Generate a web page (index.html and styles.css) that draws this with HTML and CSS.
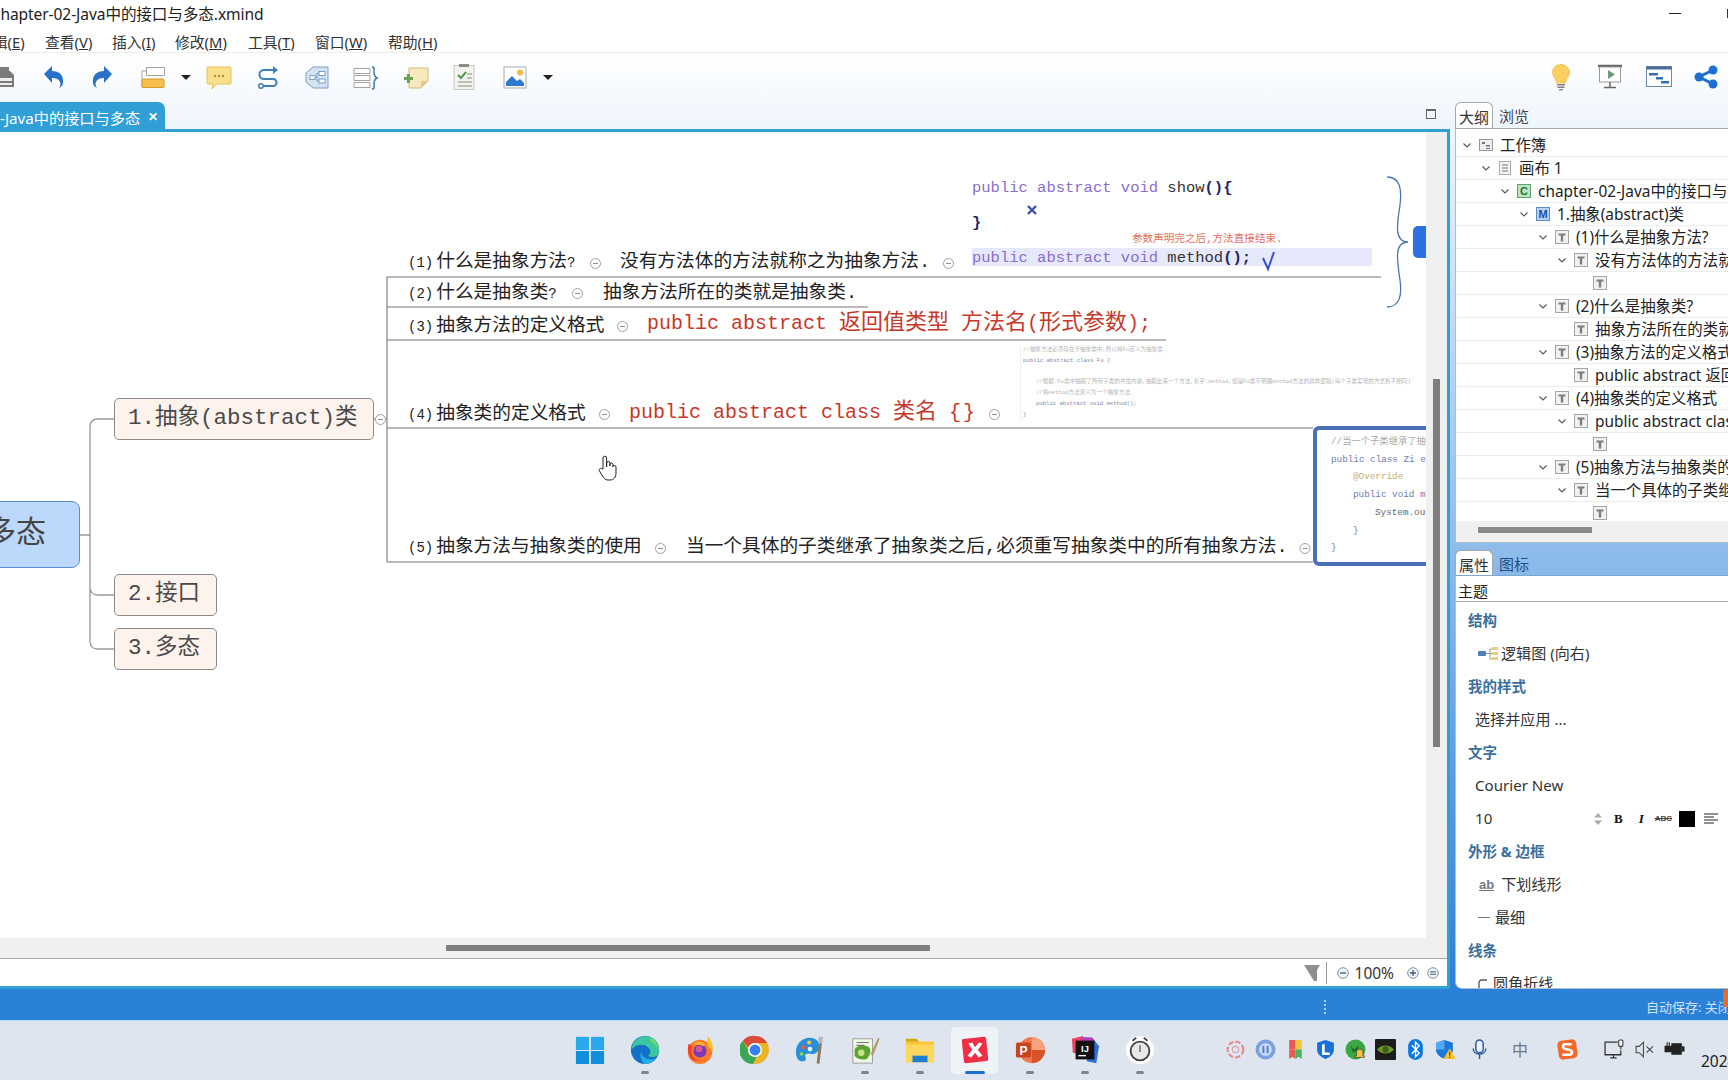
FILE: index.html
```html
<!DOCTYPE html>
<html lang="zh">
<head>
<meta charset="utf-8">
<title>XMind</title>
<link rel="stylesheet" href="styles.css">
</head>
<body>
<svg class="defs" width="0" height="0">
  <symbol id="ti" viewBox="0 0 14 14"><rect x=".5" y=".5" width="13" height="13" fill="#f1f1f1" stroke="#a5a5a5"/><path d="M3.5 3.5h7v2h-2.3v6H5.8v-6H3.5z" fill="#7d7d7d"/></symbol>
  <symbol id="chev" viewBox="0 0 12 12"><path d="M2.5 4.5 6 8l3.5-3.5" fill="none" stroke="#555" stroke-width="1.1"/></symbol>
</svg>

<header class="titlebar">
  <span class="title">chapter-02-Java中的接口与多态.xmind</span>
  <span class="minimize"></span>
  <span class="maximize"></span>
</header>

<nav class="menubar">
  <span class="menu first">编辑(<u>E</u>)</span>
  <span class="menu m-view">查看(<u>V</u>)</span>
  <span class="menu m-ins">插入(<u>I</u>)</span>
  <span class="menu m-mod">修改(<u>M</u>)</span>
  <span class="menu m-tool">工具(<u>T</u>)</span>
  <span class="menu m-win">窗口(<u>W</u>)</span>
  <span class="menu m-help">帮助(<u>H</u>)</span>
</nav>

<div class="main">
  <div class="toolbar">
    <span class="tb tb-first"><svg viewBox="0 0 28 28"><path d="M4 8h17l4 4v12H4z" fill="#7b7b7b"/><rect x="9" y="4" width="11" height="8" fill="#7b7b7b"/><rect x="6" y="15" width="17" height="3" fill="#eee"/><rect x="6" y="20" width="17" height="2" fill="#eee"/></svg></span>
    <span class="tb g23"><svg viewBox="0 0 28 28"><path d="M4 11 12 3v5c7 0 12 4 11 12-.2 2-1.6 4-4 5 1.5-2 1.8-4 1-6-1-2.5-4-4-8-4v5z" fill="#2a72c9"/></svg></span>
    <span class="tb g20"><svg class="flip" viewBox="0 0 28 28"><path d="M4 11 12 3v5c7 0 12 4 11 12-.2 2-1.6 4-4 5 1.5-2 1.8-4 1-6-1-2.5-4-4-8-4v5z" fill="#2a72c9"/></svg></span>
    <span class="tb g23"><svg viewBox="0 0 28 28"><path d="M7.500 4.500h18v8h-18zM7.500 8H3v16" fill="#fff" stroke="#a3a3a3"/><rect x="3" y="16" width="22" height="8.500" rx="1" fill="#f6bd4f" stroke="#d99b2b"/></svg></span>
    <span class="tb dd g13"><svg viewBox="0 0 12 28"><path d="M1 12h10l-5 5z" fill="#222"/></svg></span>
    <span class="tb g13"><svg viewBox="0 0 28 28"><path d="M3 4h22a1 1 0 0 1 1 1v15a1 1 0 0 1-1 1H12l-5 5 1-5H3a1 1 0 0 1-1-1V5a1 1 0 0 1 1-1z" fill="#fbe08c" stroke="#e9c15d"/><circle cx="10" cy="13" r="1.200" fill="#b98a2c"/><circle cx="14" cy="13" r="1.200" fill="#b98a2c"/><circle cx="18" cy="13" r="1.200" fill="#b98a2c"/></svg></span>
    <span class="tb g22"><svg viewBox="0 0 28 28"><path d="M22 7H9a4.500 4.500 0 0 0 0 9h9a3.500 3.500 0 0 1 0 7H8" fill="none" stroke="#3f7fb8" stroke-width="2"/><path d="m18 3 5 4-5 4z" fill="#3f7fb8"/><circle cx="6" cy="23" r="2.200" fill="#fff" stroke="#3f7fb8" stroke-width="1.500"/></svg></span>
    <span class="tb g20"><svg viewBox="0 0 28 28"><path d="M3 10 10 4h15v21H10l-7-6z" fill="#d5e3f1" stroke="#7b9fc6"/><rect x="7" y="12.500" width="5" height="4" fill="#fff" stroke="#7b9fc6"/><rect x="16" y="8.500" width="6" height="4" fill="#fff" stroke="#7b9fc6"/><rect x="16" y="16" width="6" height="4" fill="#fff" stroke="#7b9fc6"/><path d="M12 14.500h2v-4h2M14 14.500V18h2" fill="none" stroke="#7b9fc6"/></svg></span>
    <span class="tb g21"><svg viewBox="0 0 28 28"><path d="M2 5.500h16v5H2zM2 12.500h16v5H2zM2 19.500h16v5H2z" fill="#fff" stroke="#a3a3a3"/><path d="M20 4c3 0 2 2 2 5 0 3 1 5 3 6-2 1-3 3-3 6s1 5-2 5" fill="none" stroke="#3f78b0" stroke-width="1.500"/></svg></span>
    <span class="tb g22"><svg viewBox="0 0 28 28"><path d="M7 5h19v13l-7 7H7z" fill="#f7e8bd" stroke="#d4bb79"/><path d="M19 25v-7h7z" fill="#e3cc88"/><path d="M5 11v3H2v3h3v3h3v-3h3v-3H8v-3z" fill="#6f9f56"/></svg></span>
    <span class="tb g20"><svg viewBox="0 0 28 28"><rect x="4" y="2.500" width="20" height="24" fill="#f3f3ee" stroke="#c9c9c3"/><rect x="9" y="1" width="10" height="3" fill="#8d8d8d"/><path d="m8 12 3 3 5-6" fill="none" stroke="#4d9a4a" stroke-width="2"/><path d="M17 11h5M17 15h5M8 19h14M8 23h14" stroke="#888"/></svg></span>
    <span class="tb g23"><svg viewBox="0 0 28 28"><rect x="3" y="4" width="22" height="21" fill="#fff" stroke="#a9a9a9"/><circle cx="19" cy="9.500" r="3" fill="#f5b945"/><path d="M5 23v-4l6-6 5 5 3-2 4 4v3z" fill="#2f7ad1"/></svg></span>
    <span class="tb dd g13"><svg viewBox="0 0 12 28"><path d="M1 12h10l-5 5z" fill="#222"/></svg></span>
    <span class="tb tb-right"><svg viewBox="0 0 28 28"><path d="M14 1.500c5 0 8.500 3.500 8.500 8 0 4-3.500 6-4 10.500h-9C9 15.500 5.500 13.500 5.500 9.500c0-4.500 3.500-8 8.500-8z" fill="#fbcf63" stroke="#efb643" stroke-width=".7"/><path d="M10 21h8v1.500h-8zM10.500 23.500h7V25h-7z" fill="#7f7f7f"/><path d="M12 26h4v1.500h-4z" fill="#8f8f8f"/></svg></span>
    <span class="tb g21"><svg viewBox="0 0 28 28"><path d="M2 3h24" stroke="#666" stroke-width="2.500"/><rect x="3.500" y="4" width="21" height="15" fill="#fff" stroke="#999"/><path d="m12 7 7 4.500-7 4.500z" fill="#6d9b78"/><path d="M14 19v5M8 24.500h12" stroke="#666" stroke-width="1.500"/></svg></span>
    <span class="tb g21"><svg viewBox="0 0 28 28"><rect x="1.500" y="3.500" width="25" height="20" fill="#fff" stroke="#6f87a5"/><path d="M1.500 3.500h25v3h-25z" fill="#4a6f99"/><path d="M4 10h9v2.500H4zM11 14h7v2.500h-7zM16 18h8v2.500h-8z" fill="#3570aa"/></svg></span>
    <span class="tb g19"><svg viewBox="0 0 28 28"><path d="M21 7 7 14l14 7" fill="none" stroke="#1f6fd0" stroke-width="3"/><circle cx="21" cy="7" r="4.500" fill="#1f6fd0"/><circle cx="7" cy="14" r="4.500" fill="#1f6fd0"/><circle cx="21" cy="21" r="4.500" fill="#1f6fd0"/></svg></span>
  </div>

  <div class="workspace">
    <section class="left">
      <div class="tabstrip">
        <div class="tab"><span class="tab-label">-Java中的接口与多态</span><span class="tab-x">✕</span></div>
        <span class="restore"></span>
      </div>
      <div class="editor">
        <div class="editor-top">
          <div class="canvas-col">
            <div class="canvas">
              <svg class="wires" viewBox="0 132 1426 806" width="1426" height="806">
                <g fill="none" stroke="#999" stroke-width="1.300">
                  <path d="M80 535h10M114 419H98q-8 0-8 8v214q0 8 8 8h16M90 587q0 8 8 8h16"/>
                </g>
                <g fill="none" stroke="#777" stroke-width="1.100">
                  <path d="M387 562V277h994M387 307h481M387 340h779M374 419h13M387 428h926M387 562h926"/>
                </g>
                <g fill="#fff" stroke="#a0a0a0">
                  <circle cx="380.500" cy="419.500" r="5"/><circle cx="595.500" cy="263.500" r="5"/><circle cx="948.500" cy="263.500" r="5"/><circle cx="577.500" cy="293.500" r="5"/><circle cx="622.500" cy="326.500" r="5"/><circle cx="604.500" cy="414.500" r="5"/><circle cx="994.500" cy="414.500" r="5"/><circle cx="660.500" cy="548.500" r="5"/><circle cx="1305" cy="548.500" r="5"/>
                </g>
                <path d="M378 419.500h5M593 263.500h5M946 263.500h5M575 293.500h5M620 326.500h5M602 414.500h5M992 414.500h5M658 548.500h5M1302.500 548.500h5" stroke="#909090"/>
                <path d="M1387 177c13 0 15 12 13 28-3 19-6 37 8 37-14 0-11 18-8 38 2 15 0 27-13 27" fill="none" stroke="#4a76b5" stroke-width="1.300"/>
                <path d="m1028 206 8 8m0-8-8 8" stroke="#3f4fae" stroke-width="2.400"/>
                <path d="m1263 258 5 11 6-17" fill="none" stroke="#3b50c2" stroke-width="2"/>
                <path d="M603 469v-11a1.800 1.800 0 0 1 3.600 0v9l.1-4a1.600 1.600 0 0 1 3.200 0v3l.1-2a1.600 1.600 0 0 1 3 0v3a1.500 1.500 0 0 1 3 0v6c0 4-2 7-6 7h-2c-3 0-4-2-5.500-4l-3-5c-1-2 1-3.500 2.500-2z" fill="#fff" stroke="#222" stroke-width="1"/>
              </svg>

              <div class="central"><span>多态</span></div>
              <div class="node n1">1.抽象(abstract)类</div>
              <div class="node n2">2.接口</div>
              <div class="node n3">3.多态</div>

              <div class="topic t1"><span class="lat">(1)</span>什么是抽象方法<span class="lat">?</span></div>
              <div class="topic t1b">没有方法体的方法就称之为抽象方法.</div>
              <div class="topic t2"><span class="lat">(2)</span>什么是抽象类<span class="lat">?</span></div>
              <div class="topic t2b">抽象方法所在的类就是抽象类.</div>
              <div class="topic t3"><span class="lat">(3)</span>抽象方法的定义格式</div>
              <div class="topic red r3">public abstract <span class="cjk">返回值类型</span> <span class="cjk">方法名</span>(<span class="cjk">形式参数</span>);</div>
              <div class="topic t4"><span class="lat">(4)</span>抽象类的定义格式</div>
              <div class="topic red r4">public abstract class <span class="cjk">类名</span> {<span class="thinsp"></span>}</div>
              <div class="topic t5"><span class="lat">(5)</span>抽象方法与抽象类的使用</div>
              <div class="topic t5b">当一个具体的子类继承了抽象类之后,必须重写抽象类中的所有抽象方法.</div>

              <div class="shot1">
                <div class="cl"><span class="kw">public abstract void</span> show<b>(){</b></div>
                <div class="cl"><b>}</b></div>
                <div class="cl hl"><span class="kw">public abstract void</span> method<b>();</b></div>
              </div>
              <div class="note">参数声明完之后,方法直接结束.</div>
              <div class="stub"></div>

              <div class="shot2">
                <div class="cm">//抽象方法必须存在于抽象类中,所以将Fu定义为抽象类.</div>
                <div>public abstract class Fu {</div>
                <div class="blank"></div>
                <div class="cm in">//根据:Fu类中抽取了所有子类的共性内容,抽取出来一个方法,名字:method,但是Fu类不明确method方法的具体逻辑(每个子类实现的方式各不相同)</div>
                <div class="cm in">//将method方法定义为一个抽象方法.</div>
                <div class="in">public abstract void method();</div>
                <div>}</div>
              </div>

              <div class="shot3">
                <div class="cm">//当一个子类继承了抽象类</div>
                <div>public class Zi extends Fu {</div>
                <div class="in ann">@Override</div>
                <div class="in">public void method() {</div>
                <div class="in2">System.out.println();</div>
                <div class="in">}</div>
                <div>}</div>
              </div>
            </div>
            <div class="hbar"><span class="hthumb"></span></div>
          </div>
          <div class="vbar"><span class="vthumb"></span></div>
        </div>
        <div class="statusline">
          <svg class="filter" viewBox="0 0 16 16" width="16" height="16"><path d="M0 0h16l-3 5v11h-3L5 8z" fill="#8f8f8f"/></svg>
          <span class="divider"></span>
          <svg class="zb" viewBox="0 0 12 12" width="12" height="12"><circle cx="6" cy="6" r="5.300" fill="#eef3f8" stroke="#7f93a8"/><path d="M3 6h6" stroke="#3f5f80" stroke-width="1.300"/></svg>
          <span class="zoomval">100%</span>
          <svg class="zb zp" viewBox="0 0 12 12" width="12" height="12"><circle cx="6" cy="6" r="5.300" fill="#eef3f8" stroke="#7f93a8"/><path d="M3 6h6M6 3v6" stroke="#3f5f80" stroke-width="1.300"/></svg>
          <svg class="zb ze" viewBox="0 0 12 12" width="12" height="12"><circle cx="6" cy="6" r="5.300" fill="#eef3f8" stroke="#7f93a8"/><path d="M3 4.800h6M3 7.200h6" stroke="#3f5f80"/></svg>
        </div>
      </div>
    </section>

    <aside class="right">
      <div class="panel outline">
        <div class="ptabs"><span class="ptab active">大纲</span><span class="ptab">浏览</span></div>
        <div class="pbody">
          <div class="rows">
            <div class="row l0"><svg class="ch"><use href="#chev"/></svg><svg class="ic" viewBox="0 0 14 14"><rect x=".5" y="1.500" width="13" height="11" fill="#eee" stroke="#999"/><path d="M3 4h3v2H3zM7 7h4v1.500H7zM7 10h4v1H7z" fill="#777"/></svg><span>工作簿</span></div>
            <div class="row l1"><svg class="ch"><use href="#chev"/></svg><svg class="ic" viewBox="0 0 14 14"><rect x="1.500" y=".5" width="11" height="13" fill="#f4f4f4" stroke="#aaa"/><path d="M4 4h6M4 7h6M4 10h6" stroke="#777"/></svg><span>画布 1</span></div>
            <div class="row l2"><svg class="ch"><use href="#chev"/></svg><svg class="ic" viewBox="0 0 14 14"><rect x=".5" y=".5" width="13" height="13" fill="#bfe3c3" stroke="#5aa36a"/><text x="7" y="11" text-anchor="middle" class="ict green">C</text></svg><span>chapter-02-Java中的接口与多态</span></div>
            <div class="row l3"><svg class="ch"><use href="#chev"/></svg><svg class="ic" viewBox="0 0 14 14"><rect x=".5" y=".5" width="13" height="13" fill="#b7d2f2" stroke="#5b8cc8"/><text x="7" y="11" text-anchor="middle" class="ict blue">M</text></svg><span>1.抽象(abstract)类</span></div>
            <div class="row l4"><svg class="ch"><use href="#chev"/></svg><svg class="ic"><use href="#ti"/></svg><span>(1)什么是抽象方法?</span></div>
            <div class="row l5"><svg class="ch"><use href="#chev"/></svg><svg class="ic"><use href="#ti"/></svg><span>没有方法体的方法就称之为抽象方法.</span></div>
            <div class="row l6"><span class="ch"></span><svg class="ic"><use href="#ti"/></svg></div>
            <div class="row l4"><svg class="ch"><use href="#chev"/></svg><svg class="ic"><use href="#ti"/></svg><span>(2)什么是抽象类?</span></div>
            <div class="row l5"><span class="ch"></span><svg class="ic"><use href="#ti"/></svg><span>抽象方法所在的类就是抽象类.</span></div>
            <div class="row l4"><svg class="ch"><use href="#chev"/></svg><svg class="ic"><use href="#ti"/></svg><span>(3)抽象方法的定义格式</span></div>
            <div class="row l5"><span class="ch"></span><svg class="ic"><use href="#ti"/></svg><span>public abstract 返回值类型 方法名(形式参数);</span></div>
            <div class="row l4"><svg class="ch"><use href="#chev"/></svg><svg class="ic"><use href="#ti"/></svg><span>(4)抽象类的定义格式</span></div>
            <div class="row l5"><svg class="ch"><use href="#chev"/></svg><svg class="ic"><use href="#ti"/></svg><span>public abstract class 类名 {}</span></div>
            <div class="row l6"><span class="ch"></span><svg class="ic"><use href="#ti"/></svg></div>
            <div class="row l4"><svg class="ch"><use href="#chev"/></svg><svg class="ic"><use href="#ti"/></svg><span>(5)抽象方法与抽象类的使用</span></div>
            <div class="row l5"><svg class="ch"><use href="#chev"/></svg><svg class="ic"><use href="#ti"/></svg><span>当一个具体的子类继承了抽象类之后,必须重写抽象类中的所有抽象方法.</span></div>
            <div class="row l6"><span class="ch"></span><svg class="ic"><use href="#ti"/></svg></div>
          </div>
          <div class="phbar"><span class="phthumb"></span></div>
        </div>
      </div>

      <div class="panel props">
        <div class="ptabs"><span class="ptab active">属性</span><span class="ptab on-blue">图标</span></div>
        <div class="pbody">
          <div class="phead">主题</div>
          <div class="pscroll">
            <div class="prow sec">结构</div>
            <div class="prow val i2"><svg class="pi" viewBox="0 0 22 16" width="22" height="16"><rect x="0" y="5" width="8" height="5" rx="1" fill="#4f7fb8"/><path d="M8 7.500h4M12 3v10h2M12 3h2M12 7.500h2" fill="none" stroke="#999"/><path d="M14 1h6v3h-6zM14 6h6v3h-6zM14 11h6v3h-6z" fill="#e8cf85"/></svg>逻辑图 (向右)</div>
            <div class="prow sec">我的样式</div>
            <div class="prow val i1">选择并应用 ...</div>
            <div class="prow sec">文字</div>
            <div class="prow val i1">Courier New</div>
            <div class="prow val i1 fontrow">
              <span class="fsize">10</span>
              <svg class="spin" viewBox="0 0 8 12" width="8" height="12"><path d="M4 0 8 4.500H0zM4 12 0 7.500h8z" fill="#aaa"/></svg>
              <b class="fb">B</b><i class="fi">I</i><s class="fs">ABC</s><span class="swatch"></span>
              <svg class="align" viewBox="0 0 14 12" width="14" height="12"><path d="M0 1h14M0 4h10M0 7h14M0 10h10" stroke="#222"/></svg>
            </div>
            <div class="prow sec">外形 &amp; 边框</div>
            <div class="prow val i3"><span class="ab">ab</span>下划线形</div>
            <div class="prow val i4"><span class="thin"></span>最细</div>
            <div class="prow sec">线条</div>
            <div class="prow val i4"><svg class="pi2" viewBox="0 0 10 14" width="10" height="14"><path d="M9 1H4Q1 1 1 4v10" fill="none" stroke="#555" stroke-width="1.300"/></svg>圆角折线</div>
          </div>
        </div>
      </div>
    </aside>
  </div>
</div>

<footer class="statusbar">
  <span class="grip"></span>
  <span class="autosave">自动保存: 关闭</span>
  <span class="orange"></span>
</footer>

<div class="taskbar">
  <div class="apps">
    <span class="app"><svg viewBox="0 0 32 32"><path d="M1 2h14v14H1z" fill="#29a9ec"/><path d="M17 2h14v14H17z" fill="#29a9ec"/><path d="M1 17h14v14H1zM17 17h14v14H17z" fill="#0f8fdc"/></svg></span>
    <span class="app on"><svg viewBox="0 0 32 32"><circle cx="16" cy="16" r="15" fill="#1270c8"/><path d="M5 7C10 0 22-1 28 7c4 5 4 12 1 15-3 2-8 2-10 0 3-1 4-6 0-9-5-4-12-3-17 2 0-3 1-6 3-8z" fill="#3cc6a0"/><path d="M22 3c5 2 8 8 8 13-2-5-5-8-8-9z" fill="#6fdc5f"/><path d="M12 17c0 6 5 9 11 9 3 0 5-1 6-3-3 5-8 8-13 8-4-3-6-9-4-14z" fill="#1fb0e6"/></svg><em class="ind"></em></span>
    <span class="app"><svg viewBox="0 0 32 32"><circle cx="16" cy="18" r="13" fill="#ff7a2e"/><path d="M24 1c5 5 7 11 5 18-1-4-3-6-5-7z" fill="#ffc22e"/><path d="M4 9c-2 6-1 14 5 18l6 1c-7-3-10-10-7-16z" fill="#f5402f"/><circle cx="16" cy="17" r="7" fill="#7a3bb6"/><circle cx="15" cy="15" r="3.500" fill="#d5559b"/><path d="M10 8c4-2 9-1 12 2l-3 2c-3-2-6-2-9-1z" fill="#ffad2c"/></svg></span>
    <span class="app"><svg viewBox="0 0 32 32"><circle cx="16" cy="16" r="15" fill="#e9b62b"/><path d="M16 1a15 15 0 0 1 13 7.500H16A8 8 0 0 0 8.500 13L3 6A15 15 0 0 1 16 1z" fill="#dd4b3e"/><path d="M3 6l7 12a7 7 0 0 0 8 4l-4 9A15 15 0 0 1 3 6z" fill="#3aa757"/><circle cx="16" cy="16" r="7.500" fill="#fff"/><circle cx="16" cy="16" r="5.800" fill="#3a7ff0"/></svg></span>
    <span class="app"><svg viewBox="0 0 32 32"><path d="M16 3C7 3 1 10 1 18c0 6 3 11 8 10 3 0 3-3 2-5-1-3 2-4 5-3 4 1 8 0 10-5 2-6-3-12-10-12z" fill="#2b8fd8"/><circle cx="9" cy="13" r="2.200" fill="#f05a3c"/><circle cx="15" cy="8" r="2.200" fill="#f7c53f"/><circle cx="7" cy="20" r="2" fill="#8bd450"/><circle cx="16" cy="15" r="2.500" fill="#e6f3fc"/><path d="M26 6l3 1-3 24-3-1z" fill="#8f7a5c"/><path d="M25 2h5l-1 7h-4z" fill="#b9b9b9"/></svg></span>
    <span class="app on"><svg viewBox="0 0 32 32"><path d="M3 4h21v26H3z" fill="#eef6e4" stroke="#9c9c9c"/><path d="M5 15c4-5 11-5 15-2s0 13-4 13-8 0-11-4z" fill="#5aa32e"/><circle cx="12" cy="19" r="3.500" fill="#c4e58c"/><path d="M7 8h13M7 11h8" stroke="#777" stroke-width="1.200"/><path d="M22 20 30 3l1.500 1-7 18z" fill="#b39b5b"/></svg><em class="ind"></em></span>
    <span class="app on"><svg viewBox="0 0 32 32"><path d="M1 4h11l3 3h16v22H1z" fill="#f6c733"/><path d="M1 4h11l3 3H1z" fill="#d9a71e"/><path d="M1 10h30v19H1z" fill="#fdd75c"/><path d="M8 22h16v7H8z" fill="#1d7fd0"/></svg><em class="ind"></em></span>
    <span class="app active"><svg viewBox="0 0 32 32"><rect x="3" y="3" width="26" height="26" rx="2" fill="#ee2f45" transform="rotate(-6 16 16)"/><path d="m9 9 4-1 3 5 4-5 4 1-5 7 5 6-4 2-4-5-4 5-4-2 5-6z" fill="#fff"/></svg><em class="ind wide"></em></span>
    <span class="app on"><svg viewBox="0 0 32 32"><circle cx="18" cy="16" r="14" fill="#f0784a"/><path d="M18 2a14 14 0 0 1 14 14H18z" fill="#f8a17e"/><path d="M18 16h14a14 14 0 0 1-14 14z" fill="#d9532a"/><rect x="1" y="8" width="16" height="16" rx="2" fill="#c8431f"/><text x="9" y="21" text-anchor="middle" class="ppt">P</text></svg><em class="ind"></em></span>
    <span class="app on"><svg viewBox="0 0 32 32"><path d="M2 4 14 1l-2 20-9-2z" fill="#f0405e"/><path d="M14 2 24 3l7 9-3 18-10-2z" fill="#2b6fe0"/><path d="M10 3h14l2 6-8 4z" fill="#c33bb2"/><rect x="6" y="6" width="20" height="20" fill="#111"/><text x="16" y="18" text-anchor="middle" class="ij">IJ</text><path d="M9 22h8" stroke="#fff" stroke-width="1.500"/></svg><em class="ind"></em></span>
    <span class="app on"><svg viewBox="0 0 32 32"><circle cx="16" cy="16" r="15" fill="#fff"/><circle cx="16" cy="17" r="10" fill="#e8e8e8" stroke="#444" stroke-width="2"/><path d="M8 6 12 3M24 6 20 3" stroke="#444" stroke-width="2"/><path d="M16 11v7" stroke="#666" stroke-width="1.500"/></svg><em class="ind"></em></span>
  </div>
  <div class="tray">
    <span class="ti"><svg viewBox="0 0 20 20"><circle cx="10" cy="10" r="7.500" fill="none" stroke="#e68a8a" stroke-width="2" stroke-dasharray="5 2"/><circle cx="10" cy="10" r="3" fill="none" stroke="#d9a0a0"/></svg></span>
    <span class="ti"><svg viewBox="0 0 20 20"><circle cx="10" cy="10" r="9.500" fill="#7c9fe0"/><circle cx="10" cy="10" r="6" fill="#cfe0fb"/><path d="M8 6.500v7M12 6.500v7" stroke="#5b7fd0" stroke-width="2"/></svg></span>
    <span class="ti"><svg viewBox="0 0 20 20"><path d="M4 1h6v9H4z" fill="#e45a4c"/><path d="M10 1h6v9h-6z" fill="#f5c63a"/><path d="M4 10h6v9l-3-2-3 2z" fill="#e45a4c"/><path d="M10 10h6v9l-3-2-3 2z" fill="#4fb45f"/></svg></span>
    <span class="ti"><svg viewBox="0 0 20 20"><path d="M10 1 18 3.500v7c0 4-4 7-8 8.500-4-1.500-8-4.500-8-8.500v-7z" fill="#1a6fd8"/><path d="M8 5v9h6" fill="none" stroke="#fff" stroke-width="2.500"/></svg></span>
    <span class="ti"><svg viewBox="0 0 20 20"><circle cx="10" cy="10" r="9.500" fill="#3ca645"/><path d="M5 7l4 3 4-4-1 5-4 2z" fill="#1d6b27"/><path d="M11 12c0-3 6-3 6 0v4h1.500v1.500H9.500V16H11z" fill="#f7c53a" stroke="#333" stroke-width=".6"/></svg></span>
    <span class="ti"><svg viewBox="0 0 20 20"><rect width="20" height="20" rx="1" fill="#1c1c1c"/><path d="M2 10c4-5 12-5 16 0-4 5-12 5-16 0z" fill="#6b9a2a"/><circle cx="10" cy="10" r="3" fill="#3f5f15"/></svg></span>
    <span class="ti"><svg viewBox="0 0 20 20"><rect x="3" y="0" width="14" height="20" rx="7" fill="#0b78e0"/><path d="m6.500 6 7 7.500L10 17V3l3.500 3.500-7 7.500" fill="none" stroke="#fff" stroke-width="1.300"/></svg></span>
    <span class="ti"><svg viewBox="0 0 20 20"><path d="M9 1 17 3.500v7c0 4-4 7-8 8.500-4-1.500-8-4.500-8-8.500v-7z" fill="#1a78d8"/><path d="M9 1v9H1V3.500z" fill="#55a8ec"/><path d="m14 9 6 10H8z" fill="#f9c22e"/><path d="M14 12v4M14 17v1" stroke="#333"/></svg></span>
    <span class="ti sp4"><svg viewBox="0 0 20 20"><rect x="6.500" y="1" width="7" height="12" rx="3.500" fill="#eaf1fa" stroke="#2a5c9e" stroke-width="1.400"/><path d="M4 9c0 7 12 7 12 0M10 15v4" fill="none" stroke="#2a5c9e" stroke-width="1.400"/></svg></span>
    <span class="ti sp11 zh">中</span>
    <span class="ti sp17"><svg viewBox="0 0 20 20"><rect x="1" y="1" width="18" height="18" rx="4" fill="#f16a2a" transform="rotate(-8 10 10)"/><path d="M14 5H8C5 5 5 9 8 9.500l4 1c3 .5 3 4.500 0 4.500H5" fill="none" stroke="#fff" stroke-width="2.400"/></svg></span>
    <span class="ti sp17"><svg viewBox="0 0 20 20"><path d="M13 3H1v12h15v-4M6 18h6M9 15v3" fill="none" stroke="#333" stroke-width="1.200"/><rect x="14" y="1" width="4" height="6" rx="1" fill="#fff" stroke="#333"/><path d="M16 7v3" stroke="#333"/></svg></span>
    <span class="ti"><svg viewBox="0 0 20 20"><path d="M2 7h3l4-4v14l-4-4H2z" fill="none" stroke="#444"/><path d="m12 7 6 6m0-6-6 6" stroke="#444"/></svg></span>
    <span class="ti"><svg viewBox="0 0 20 20"><path d="M7 4h10v11H7z" fill="#222"/><path d="M1 7h6v5H1zM3 3v4M5 3v4" stroke="#222" fill="#222"/><path d="M17 7h2.500v5H17z" fill="#222"/></svg></span>
    <span class="clock">2024</span>
  </div>
</div>
</body>
</html>
```
FILE: styles.css
```css
* { box-sizing: border-box; }
html, body { margin: 0; padding: 0; width: 1728px; height: 1080px; overflow: hidden; }
body { font-family: "Noto Sans", "Noto Sans CJK SC", sans-serif; color: #222; background: #fff; display: flex; flex-direction: column; }
.defs { position: absolute; }

.titlebar { height: 26px; flex: none; display: flex; align-items: center; position: relative; background: #fff; }
.title { font-size: 15.600px; margin-left: -7px; white-space: nowrap; letter-spacing: -.1px; }
.minimize { position: absolute; left: 1669px; top: 13px; width: 12px; height: 1px; background: #222; }
.maximize { position: absolute; left: 1727px; top: 9px; width: 1px; height: 9px; background: #333; }

.menubar { height: 27px; flex: none; display: flex; align-items: center; padding-top: 4px; font-size: 14.800px; white-space: nowrap; background: #fff; border-bottom: 1px solid #eee; }
.menu { color: #333; flex: none; }
.first { width: 49px; margin-left: -22px; }
.m-view { margin-left: 18px; width: 67px; }
.m-ins { width: 63px; }
.m-mod { width: 73px; }
.m-tool { width: 67px; }
.m-win { width: 73px; }

.main { flex: none; height: 936px; display: flex; flex-direction: column; background: linear-gradient(#fff 0, #2b80d8 100%); }
.toolbar { height: 47px; flex: none; display: flex; align-items: center; padding-left: 0; }
.tb { width: 28px; height: 28px; flex: none; display: block; margin-left: 20px; }
.tb svg { display: block; width: 100%; height: 100%; }
.tb-first { margin-left: -11px; }
.g13 { margin-left: 13px; }
.g19 { margin-left: 19px; }
.g20 { margin-left: 20px; }
.g21 { margin-left: 21px; }
.g22 { margin-left: 22px; }
.g23 { margin-left: 23px; }
.dd { width: 12px; }
.flip { transform: scaleX(-1); }
.tb-right { margin-left: auto; margin-right: 0; }
.toolbar .tb:last-child { margin-right: 8px; }

.workspace { flex: 1; min-height: 0; display: flex; }
.left { width: 1450px; flex: none; display: flex; flex-direction: column; }
.tabstrip { height: 29px; flex: none; display: flex; align-items: flex-end; justify-content: space-between; padding-right: 14px; }
.tab { width: 165px; height: 27px; background: #2f9fd6; border-radius: 0 7px 0 0; display: flex; align-items: center; padding-top: 2px; color: #fff; font-size: 15.200px; white-space: nowrap; overflow: hidden; }
.tab-label { flex: none; width: 148px; }
.tab-x { font-size: 12px; font-weight: 700; }
.restore { width: 10px; height: 10px; border: 1px solid #666; border-top-width: 2px; margin-bottom: 10px; }

.editor { flex: 1; min-height: 0; background: #fff; border: 3px solid #2f9fd6; border-left: none; display: flex; flex-direction: column; }
.editor-top { flex: 1; min-height: 0; display: flex; }
.canvas-col { width: 1426px; flex: none; display: flex; flex-direction: column; }
.canvas { flex: 1; min-height: 0; position: relative; overflow: hidden; background: #fff; font-family: "Liberation Mono", "Noto Sans CJK SC", monospace; }
.wires { position: absolute; left: 0; top: 0; display: block; z-index: 1; }
.hbar { height: 20px; flex: none; background: #f0f0f0; padding: 7px 0 0 446px; }
.hthumb { display: block; width: 484px; height: 6px; background: #7e7e7e; border-radius: 1px; }
.vbar { flex: 1; background: #f0f0f0; padding: 247px 0 0 7px; }
.vthumb { display: block; width: 7px; height: 368px; background: #7e7e7e; }

.statusline { height: 28px; flex: none; border-top: 1px solid #aaa; background: #fff; display: flex; align-items: center; justify-content: flex-end; padding-right: 8px; }
.divider { width: 1px; height: 22px; background: #999; margin: 0 10px 0 6px; }
.zoomval { font-size: 15.500px; margin: 0 0 0 6px; color: #333; }
.zp { margin-left: 13px; }
.ze { margin-left: 8px; }

.central { position: absolute; left: -40px; top: 369px; width: 120px; height: 67px; background: #bcd8fb; border: 1px solid #5a8ed0; border-radius: 8px; display: flex; align-items: center; justify-content: flex-end; padding: 0 33px 11px 0; font-size: 30px; color: #444; }
.node { position: absolute; left: 114px; height: 42px; background: #fdf3ec; border: 1px solid #8a8a8a; border-radius: 5px; font-size: 22.500px; line-height: 38px; padding-left: 13px; color: #4a4a4a; white-space: nowrap; }
.n1 { top: 266px; width: 260px; }
.n2 { top: 442px; width: 103px; }
.n3 { top: 496px; width: 103px; }

.topic { position: absolute; height: 24px; line-height: 24px; font-size: 18.700px; color: #222; white-space: nowrap; }
.lat { font-size: 14px; }
.t1 .lat:first-child, .t2 .lat:first-child, .t3 .lat:first-child, .t4 .lat:first-child, .t5 .lat:first-child { margin-right: 3px; }
.red { color: #c4392b; font-size: 20px; }
.cjk { font-size: 22px; }
.thinsp { display: inline-block; width: 2px; }
.t1 { left: 408px; top: 118px; }
.t1b { left: 620px; top: 118px; }
.t2 { left: 408px; top: 149px; }
.t2b { left: 603px; top: 149px; }
.t3 { left: 408px; top: 182px; }
.r3 { left: 647px; top: 180px; }
.t4 { left: 408px; top: 270px; }
.r4 { left: 629px; top: 269px; }
.t5 { left: 408px; top: 403px; }
.t5b { left: 686px; top: 403px; }

.shot1 { position: absolute; left: 972px; top: 29px; width: 400px; font-size: 15.500px; color: #333; white-space: nowrap; }
.cl { height: 18px; line-height: 20px; margin-top: 17px; }
.cl b { color: #24245c; }
.kw { color: #8a6fc8; }
.hl { background: #e6e8fb; }
.note { position: absolute; left: 1132px; top: 100px; font-size: 10.600px; line-height: 14px; color: #e0705f; white-space: nowrap; }
.stub { position: absolute; left: 1413px; top: 94px; width: 20px; height: 32px; border-radius: 5px; background: #2b72e0; }

.shot2 { position: absolute; left: 1020px; top: 213px; font-size: 5.600px; line-height: 10.800px; color: #7f88ad; white-space: nowrap; border-left: 1px solid #f0f0f0; padding-left: 2px; }
.shot2 .cm { color: #b5b5b5; }
.shot2 .blank { height: 10.800px; }
.shot2 .in { padding-left: 13px; }

.shot3 { position: absolute; left: 1313px; top: 294px; width: 140px; height: 140px; border: 4px solid #4a70b8; border-radius: 6px; padding: 3px 0 0 14px; font-size: 9.300px; line-height: 17.700px; color: #6f7db0; white-space: nowrap; overflow: hidden; background: #fff; }
.shot3 .cm { color: #aaa; }
.shot3 .in { padding-left: 22px; }
.shot3 .in2 { padding-left: 44px; color: #666; }
.shot3 .ann { color: #c4b078; }

.right { width: 273px; flex: none; margin-left: 5px; padding-top: 2px; display: flex; flex-direction: column; }
.panel { display: flex; flex-direction: column; min-height: 0; }
.outline { height: 441px; flex: none; }
.props { flex: 1; margin-top: 7px; }
.ptabs { flex: none; display: flex; align-items: flex-end; border-bottom: 1px solid #a8a8a8; font-size: 15px; }
.outline .ptabs { height: 27px; }
.props .ptabs { height: 26px; border-bottom-color: #7fa6cf; }
.ptab { width: 38px; height: 100%; text-align: center; line-height: 28px; color: #445; margin-right: 2px; }
.ptab.active { background: #fff; border: 1px solid #a8a8a8; border-bottom: none; border-radius: 6px 6px 0 0; color: #333; }
.on-blue { color: #1f4f86; }
.pbody { flex: 1; min-height: 0; background: #fff; border-left: 1px solid #aebccb; border-bottom: 1px solid #aebccb; display: flex; flex-direction: column; overflow: hidden; }
.props .pbody { border-radius: 0 0 0 7px; }

.rows { flex: 1; min-height: 0; overflow: hidden; padding-top: 4.700px; }
.row { height: 23px; display: flex; align-items: center; border-bottom: 1px solid #ededed; font-size: 15.400px; white-space: nowrap; color: #222; }
.row.l0 { padding-left: 5px; }
.row.l1 { padding-left: 24px; }
.row.l2 { padding-left: 43px; }
.row.l3 { padding-left: 62px; }
.row.l4 { padding-left: 81px; }
.row.l5 { padding-left: 100px; }
.row.l6 { padding-left: 119px; }
.ch { width: 12px; height: 12px; flex: none; margin-right: 6px; display: block; }
.ic { width: 14px; height: 14px; flex: none; margin-right: 7px; display: block; }
.ict { font: 700 11px "Liberation Sans", sans-serif; }
.green { fill: #14783a; }
.blue { fill: #1c4f9c; }
.phbar { height: 21px; flex: none; background: #f0f0f0; padding: 6px 0 0 22px; }
.phthumb { display: block; width: 114px; height: 6px; background: #8a8a8a; }

.phead { height: 26px; flex: none; border-bottom: 1px solid #aaa; font-size: 15px; line-height: 30px; padding-left: 2px; color: #222; }
.pscroll { flex: 1; min-height: 0; overflow: hidden; padding-top: 2px; }
.prow { height: 33px; line-height: 33px; display: flex; align-items: center; white-space: nowrap; font-size: 15.100px; }
.sec { padding-left: 12px; font-weight: 700; color: #3b6f9c; font-size: 14.500px; }
.val { color: #333; }
.i1 { padding-left: 19px; }
.i2 { padding-left: 22px; }
.i3 { padding-left: 23px; }
.i4 { padding-left: 22px; }
.pi { margin-right: 1px; flex: none; }
.pi2 { margin-right: 5px; flex: none; margin-top: 5px; }
.fontrow { position: relative; }
.fsize { width: 119px; flex: none; }
.spin { flex: none; }
.fb { font: 700 13px "Liberation Serif", serif; margin-left: 12px; color: #111; }
.fi { font: italic 700 13px "Liberation Serif", serif; margin-left: 16px; color: #111; width: 8px; }
.fs { font: 700 8px "Liberation Sans", sans-serif; margin-left: 8px; color: #444; }
.swatch { width: 16px; height: 16px; background: #000; margin-left: 7px; flex: none; }
.align { margin-left: 9px; flex: none; }
.ab { font: 700 13px "Liberation Sans", sans-serif; color: #778; text-decoration: underline; margin-right: 7px; }
.thin { width: 12px; height: 1px; background: #777; margin-right: 5px; flex: none; }

.statusbar { height: 31px; flex: none; background: #2b80d8; position: relative; }
.grip { position: absolute; left: 1324px; top: 11px; width: 2px; height: 15px; background: repeating-linear-gradient(#a9cbf0 0 2px, transparent 2px 4px); }
.autosave { position: absolute; left: 1646px; top: 8px; font-size: 13px; line-height: 20px; color: #cfe2f6; white-space: nowrap; }
.orange { position: absolute; left: 1723px; top: 0; width: 10px; height: 18px; background: #f0682a; border-radius: 4px 0 0 0; }

.taskbar { height: 60px; flex: none; display: flex; align-items: center; background: #dfe5ee; border-top: 1px solid #bcd9f8; }
.apps { display: flex; margin-left: 562px; flex: none; }
.app { width: 55px; height: 59px; display: flex; align-items: center; justify-content: center; position: relative; }
.app svg { width: 30px; height: 30px; display: block; margin-top: -2px; }
.app.active::before { content: ""; position: absolute; left: 4px; right: 4px; top: 6px; bottom: 6px; background: #eff3f8; border-radius: 5px; }
.app.active svg { position: relative; }
.ind { position: absolute; left: 24px; bottom: 6px; width: 8px; height: 3px; border-radius: 2px; background: #80838a; }
.ind.wide { left: 18px; width: 20px; background: #1a6fd0; }
.ppt { font: 700 13px "Liberation Sans", sans-serif; fill: #fff; }
.ij { font: 700 10px "Liberation Sans", sans-serif; fill: #fff; }
.tray { display: flex; align-items: center; margin-left: 53px; flex: none; }
.ti { width: 30px; height: 30px; display: flex; align-items: center; justify-content: center; flex: none; margin-top: -3px; }
.ti svg { width: 21px; height: 21px; display: block; }
.sp4 { margin-left: 4px; }
.sp11 { margin-left: 11px; }
.sp17 { margin-left: 17px; }
.zh { font-size: 16px; color: #777; }
.clock { font-size: 15.500px; margin-left: 12px; margin-top: 20px; color: #222; white-space: nowrap; }
```
